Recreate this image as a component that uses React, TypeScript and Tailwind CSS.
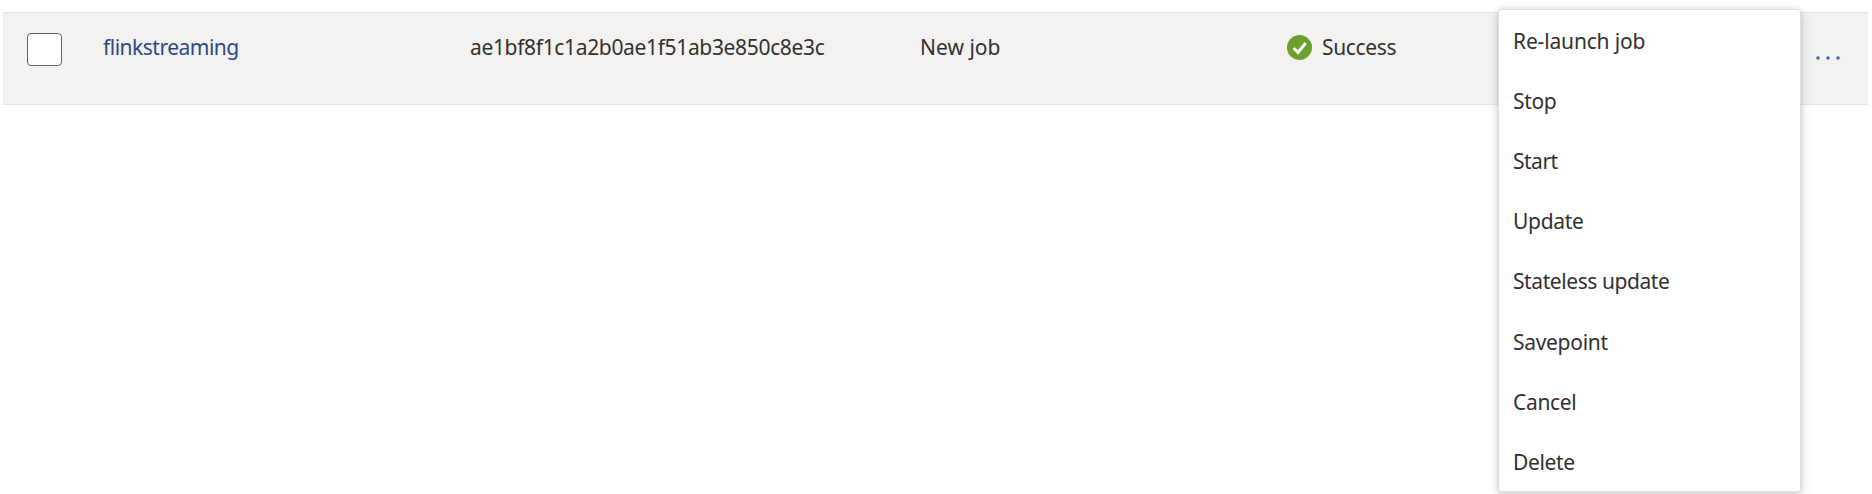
const menuItems = [
  { label: 'Re-launch job', tracking: 'tracking-[-0.16px]' },
  { label: 'Stop', tracking: 'tracking-[-0.35px]' },
  { label: 'Start', tracking: 'tracking-[-0.5px]' },
  { label: 'Update', tracking: 'tracking-[-0.32px]' },
  { label: 'Stateless update', tracking: 'tracking-[-0.42px]' },
  { label: 'Savepoint', tracking: 'tracking-[-0.3px]' },
  { label: 'Cancel', tracking: 'tracking-[-0.32px]' },
  { label: 'Delete', tracking: 'tracking-[-0.35px]' },
];

function SuccessIcon() {
  return (
    <svg className="block h-[25px] w-[25px] shrink-0" viewBox="0 0 25 25">
      <circle cx="12.5" cy="12.5" r="12.5" fill="#6ba02a" />
      <path d="M6.6 13 L11 17.4 L18.7 8" fill="none" stroke="#fff" strokeWidth="3" />
    </svg>
  );
}

function MoreIcon() {
  return (
    <svg className="block h-1 w-6" viewBox="0 0 24 4">
      <circle cx="2" cy="2" r="1.7" fill="#2f66c4" />
      <circle cx="12" cy="2" r="1.7" fill="#2f66c4" />
      <circle cx="22" cy="2" r="1.7" fill="#2f66c4" />
    </svg>
  );
}

export default function App() {
  return (
    <div className="relative h-[494px] w-[1872px] overflow-hidden bg-white pt-3 pr-1 pl-[3px] font-['Noto_Sans',sans-serif] text-[21px] leading-[30px] text-[#323130]">
      <div className="flex h-[93px] items-start border-y border-[#e6e5e4] bg-[#f3f2f1] whitespace-nowrap">
        <div className="w-[99px] pt-5 pl-6">
          <div className="h-[33px] w-[35px] rounded-[4px] border-[1.5px] border-[#656361] bg-white" />
        </div>
        <div className="w-[368px] pt-[19px] pl-px tracking-[-0.5px] text-[#2b4a82]">flinkstreaming</div>
        <div className="w-[450px] pt-[19px] tracking-[-0.34px]">ae1bf8f1c1a2b0ae1f51ab3e850c8e3c</div>
        <div className="w-[367px] pt-[19px] tracking-[0.02px]">New job</div>
        <div className="flex w-[529px] items-center gap-[10px] pt-[19px]">
          <SuccessIcon />
          <span className="tracking-[-0.35px]">Success</span>
        </div>
        <div className="pt-[43px]">
          <MoreIcon />
        </div>
      </div>
      <div className="absolute top-[9px] left-[1498px] h-[483px] w-[303px] rounded-[3px] border border-[#e0dfde] bg-white pt-px pl-[14px] shadow-[0_4px_12px_rgba(0,0,0,0.15),0_0_4px_rgba(0,0,0,0.13)]">
        {menuItems.map((item) => (
          <div key={item.label} className={`flex h-[60.1px] items-center whitespace-nowrap ${item.tracking}`}>
            {item.label}
          </div>
        ))}
      </div>
    </div>
  );
}
